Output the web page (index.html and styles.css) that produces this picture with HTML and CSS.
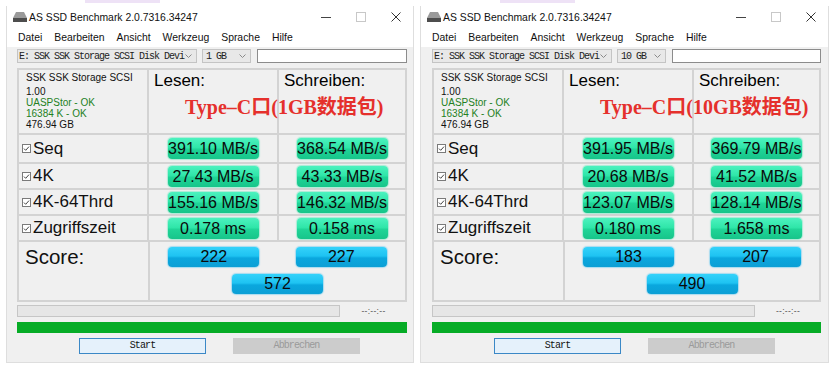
FILE: index.html
```html
<!DOCTYPE html>
<html>
<head>
<meta charset="utf-8">
<title>AS SSD Benchmark</title>
<link rel="stylesheet" href="styles.css">
</head>
<body>
<div class="topstrip">
  <div class="ts-half"><span class="ts-purple"></span></div>
  <div class="ts-half"><span class="ts-purple"></span></div>
</div>
<div class="screens">
  <!-- LEFT WINDOW -->
  <div class="win">
    <div class="titlebar">
      <svg class="appicon" viewBox="0 0 14 10" width="14" height="10"><polygon points="3,0 11,0 14,6 0,6" fill="#9a9a9a"/><rect x="0" y="6" width="14" height="4" fill="#4d4d4d"/></svg>
      <span class="title">AS SSD Benchmark 2.0.7316.34247</span>
      <div class="controls">
        <span class="ctl"><svg width="10" height="10" viewBox="0 0 10 10"><line x1="0" y1="5.5" x2="10" y2="5.5" stroke="#444" stroke-width="1"/></svg></span>
        <span class="ctl"><svg width="10" height="10" viewBox="0 0 10 10"><rect x="0.5" y="0.5" width="9" height="9" fill="none" stroke="#c8c8c8" stroke-width="1"/></svg></span>
        <span class="ctl"><svg width="10" height="10" viewBox="0 0 10 10"><path d="M0.5 0.5 L9.5 9.5 M9.5 0.5 L0.5 9.5" stroke="#333" stroke-width="1"/></svg></span>
      </div>
    </div>
    <div class="menubar">
      <span>Datei</span><span>Bearbeiten</span><span>Ansicht</span><span>Werkzeug</span><span>Sprache</span><span>Hilfe</span>
    </div>
    <div class="client">
      <div class="toolrow">
        <div class="combo combo-drive"><span class="combo-text">E: SSK SSK Storage SCSI Disk Devi</span><svg class="chev" width="7" height="4" viewBox="0 0 7 4"><path d="M0.5 0.5 L3.5 3.5 L6.5 0.5" fill="none" stroke="#8a8a8a"/></svg></div>
        <div class="combo combo-size"><span class="combo-text">1 GB</span><svg class="chev" width="7" height="4" viewBox="0 0 7 4"><path d="M0.5 0.5 L3.5 3.5 L6.5 0.5" fill="none" stroke="#8a8a8a"/></svg></div>
        <div class="textbox"></div>
      </div>
      <div class="results">
        <div class="cell info">
          <div class="info-name">SSK SSK Storage SCSI</div>
          <div>1.00</div>
          <div class="ok">UASPStor - OK</div>
          <div class="ok">16384 K - OK</div>
          <div>476.94 GB</div>
        </div>
        <div class="cell head">Lesen:</div>
        <div class="cell head">Schreiben:</div>

        <div class="cell label"><svg class="chk" width="9" height="9" viewBox="0 0 9 9"><rect x="0.5" y="0.5" width="8" height="8" fill="#fff" stroke="#7a7a7a"/><path d="M2 4.6 L3.7 6.3 L7 2.6" fill="none" stroke="#444"/></svg>Seq</div>
        <div class="cell val"><span class="pill">391.10 MB/s</span></div>
        <div class="cell val"><span class="pill">368.54 MB/s</span></div>

        <div class="cell label"><svg class="chk" width="9" height="9" viewBox="0 0 9 9"><rect x="0.5" y="0.5" width="8" height="8" fill="#fff" stroke="#7a7a7a"/><path d="M2 4.6 L3.7 6.3 L7 2.6" fill="none" stroke="#444"/></svg>4K</div>
        <div class="cell val"><span class="pill">27.43 MB/s</span></div>
        <div class="cell val"><span class="pill">43.33 MB/s</span></div>

        <div class="cell label"><svg class="chk" width="9" height="9" viewBox="0 0 9 9"><rect x="0.5" y="0.5" width="8" height="8" fill="#fff" stroke="#7a7a7a"/><path d="M2 4.6 L3.7 6.3 L7 2.6" fill="none" stroke="#444"/></svg>4K-64Thrd</div>
        <div class="cell val"><span class="pill">155.16 MB/s</span></div>
        <div class="cell val"><span class="pill">146.32 MB/s</span></div>

        <div class="cell label"><svg class="chk" width="9" height="9" viewBox="0 0 9 9"><rect x="0.5" y="0.5" width="8" height="8" fill="#fff" stroke="#7a7a7a"/><path d="M2 4.6 L3.7 6.3 L7 2.6" fill="none" stroke="#444"/></svg>Zugriffszeit</div>
        <div class="cell val"><span class="pill">0.178 ms</span></div>
        <div class="cell val"><span class="pill">0.158 ms</span></div>

        <div class="overlay">Type–C口(1GB数据包)</div>
      </div>
      <div class="scorebox">
        <div class="cell score-label">Score:</div>
        <div class="cell score-vals">
          <span class="pill blue">222</span>
          <span class="pill blue">227</span>
          <span class="pill blue total">572</span>
        </div>
      </div>
      <div class="progressrow">
        <div class="progress"></div>
        <span class="time">--:--:--</span>
      </div>
      <div class="greenbar"></div>
      <div class="buttons">
        <button class="btn btn-start">Start</button>
        <button class="btn btn-abort" disabled>Abbrechen</button>
      </div>
    </div>
  </div>

  <!-- RIGHT WINDOW -->
  <div class="win win-b">
    <div class="titlebar">
      <svg class="appicon" viewBox="0 0 14 10" width="14" height="10"><polygon points="3,0 11,0 14,6 0,6" fill="#9a9a9a"/><rect x="0" y="6" width="14" height="4" fill="#4d4d4d"/></svg>
      <span class="title">AS SSD Benchmark 2.0.7316.34247</span>
      <div class="controls">
        <span class="ctl"><svg width="10" height="10" viewBox="0 0 10 10"><line x1="0" y1="5.5" x2="10" y2="5.5" stroke="#444" stroke-width="1"/></svg></span>
        <span class="ctl"><svg width="10" height="10" viewBox="0 0 10 10"><rect x="0.5" y="0.5" width="9" height="9" fill="none" stroke="#c8c8c8" stroke-width="1"/></svg></span>
        <span class="ctl"><svg width="10" height="10" viewBox="0 0 10 10"><path d="M0.5 0.5 L9.5 9.5 M9.5 0.5 L0.5 9.5" stroke="#333" stroke-width="1"/></svg></span>
      </div>
    </div>
    <div class="menubar">
      <span>Datei</span><span>Bearbeiten</span><span>Ansicht</span><span>Werkzeug</span><span>Sprache</span><span>Hilfe</span>
    </div>
    <div class="client">
      <div class="toolrow">
        <div class="combo combo-drive"><span class="combo-text">E: SSK SSK Storage SCSI Disk Devi</span><svg class="chev" width="7" height="4" viewBox="0 0 7 4"><path d="M0.5 0.5 L3.5 3.5 L6.5 0.5" fill="none" stroke="#8a8a8a"/></svg></div>
        <div class="combo combo-size"><span class="combo-text">10 GB</span><svg class="chev" width="7" height="4" viewBox="0 0 7 4"><path d="M0.5 0.5 L3.5 3.5 L6.5 0.5" fill="none" stroke="#8a8a8a"/></svg></div>
        <div class="textbox"></div>
      </div>
      <div class="results">
        <div class="cell info">
          <div class="info-name">SSK SSK Storage SCSI</div>
          <div>1.00</div>
          <div class="ok">UASPStor - OK</div>
          <div class="ok">16384 K - OK</div>
          <div>476.94 GB</div>
        </div>
        <div class="cell head">Lesen:</div>
        <div class="cell head">Schreiben:</div>

        <div class="cell label"><svg class="chk" width="9" height="9" viewBox="0 0 9 9"><rect x="0.5" y="0.5" width="8" height="8" fill="#fff" stroke="#7a7a7a"/><path d="M2 4.6 L3.7 6.3 L7 2.6" fill="none" stroke="#444"/></svg>Seq</div>
        <div class="cell val"><span class="pill">391.95 MB/s</span></div>
        <div class="cell val"><span class="pill">369.79 MB/s</span></div>

        <div class="cell label"><svg class="chk" width="9" height="9" viewBox="0 0 9 9"><rect x="0.5" y="0.5" width="8" height="8" fill="#fff" stroke="#7a7a7a"/><path d="M2 4.6 L3.7 6.3 L7 2.6" fill="none" stroke="#444"/></svg>4K</div>
        <div class="cell val"><span class="pill">20.68 MB/s</span></div>
        <div class="cell val"><span class="pill">41.52 MB/s</span></div>

        <div class="cell label"><svg class="chk" width="9" height="9" viewBox="0 0 9 9"><rect x="0.5" y="0.5" width="8" height="8" fill="#fff" stroke="#7a7a7a"/><path d="M2 4.6 L3.7 6.3 L7 2.6" fill="none" stroke="#444"/></svg>4K-64Thrd</div>
        <div class="cell val"><span class="pill">123.07 MB/s</span></div>
        <div class="cell val"><span class="pill">128.14 MB/s</span></div>

        <div class="cell label"><svg class="chk" width="9" height="9" viewBox="0 0 9 9"><rect x="0.5" y="0.5" width="8" height="8" fill="#fff" stroke="#7a7a7a"/><path d="M2 4.6 L3.7 6.3 L7 2.6" fill="none" stroke="#444"/></svg>Zugriffszeit</div>
        <div class="cell val"><span class="pill">0.180 ms</span></div>
        <div class="cell val"><span class="pill">1.658 ms</span></div>

        <div class="overlay">Type–C口(10GB数据包)</div>
      </div>
      <div class="scorebox">
        <div class="cell score-label">Score:</div>
        <div class="cell score-vals">
          <span class="pill blue">183</span>
          <span class="pill blue">207</span>
          <span class="pill blue total">490</span>
        </div>
      </div>
      <div class="progressrow">
        <div class="progress"></div>
        <span class="time">--:--:--</span>
      </div>
      <div class="greenbar"></div>
      <div class="buttons">
        <button class="btn btn-start">Start</button>
        <button class="btn btn-abort" disabled>Abbrechen</button>
      </div>
    </div>
  </div>
</div>
</body>
</html>
```

FILE: styles.css
```css
* { box-sizing: border-box; margin: 0; padding: 0; }

html, body {
  width: 835px;
  height: 370px;
  overflow: hidden;
  background: #ffffff;
}

body {
  font-family: "Liberation Sans", Arial, sans-serif;
  color: #000;
}

/* faint remains of the image above */
.topstrip {
  height: 6px;
  display: flex;
}
.ts-half {
  width: 415px;
  padding-left: 85px;
}
.ts-purple {
  display: block;
  width: 75px;
  height: 3px;
  background: #eee2f6;
}

.screens {
  display: flex;
  gap: 6px;
  padding-left: 6px;
}

.win {
  width: 408px;
  height: 357px;
  background: #f0f0f0;
  border: 1px solid #dedede;
  border-top: none;
  display: flex;
  flex-direction: column;
}
.win-b { width: 409px; }

/* title bar */
.titlebar {
  height: 22px;
  background: #ffffff;
  display: flex;
  align-items: center;
  padding-left: 6px;
}
.appicon { flex: none; margin-top: -1px; }
.title {
  margin-left: 2px;
  font-size: 10.4px;
  color: #111;
}
.controls {
  margin-left: auto;
  display: flex;
  height: 100%;
}
.ctl {
  width: 35px;
  display: flex;
  align-items: center;
  justify-content: center;
}

/* menu */
.menubar {
  height: 19px;
  background: #ffffff;
  display: flex;
  align-items: center;
  gap: 12px;
  padding-left: 11px;
  font-size: 10.4px;
  color: #111;
}

/* client area */
.client {
  flex: 1;
  padding: 2px 6px 0 10px;
  display: flex;
  flex-direction: column;
}
.win-b .client { padding-left: 11px; padding-right: 7px; }

.toolrow {
  height: 14px;
  display: flex;
}
.combo {
  height: 14px;
  background: #e8e8e8;
  border: 1px solid #c4c4c4;
  display: flex;
  align-items: center;
  padding: 0 4px 0 1px;
}
.combo-text {
  font-family: "Liberation Mono", monospace;
  font-size: 10px;
  letter-spacing: -1px;
  color: #222;
  white-space: nowrap;
  flex: 1;
}
.chev { flex: none; }
.combo-drive { width: 180px; }
.combo-size { width: 49px; margin-left: 5px; padding-left: 3px; }
.textbox {
  flex: 1;
  margin-left: 6px;
  background: #fff;
  border: 1px solid #8c8c8c;
}

/* results grid */
.results {
  position: relative;
  margin-top: 5px;
  display: grid;
  grid-template-columns: 128px 128px 1fr;
  grid-template-rows: 63px 27px 24px 24px 24px;
  gap: 2px;
  padding: 2px;
  background: #d3d3d3;
}
.cell {
  background: #f0f0f0;
}
.info {
  padding: 2px 0 0 7px;
  font-size: 10px;
  line-height: 11px;
  color: #111;
}
.info-name { margin-bottom: 3px; }
.ok { color: #238023; }
.head {
  padding: 1px 0 0 5px;
  font-size: 17px;
  line-height: 20px;
  color: #000;
}
.label {
  display: flex;
  align-items: center;
  padding-left: 3px;
  font-size: 17px;
  color: #111;
}
.chk { flex: none; margin-right: 2px; }
.val {
  display: flex;
  align-items: center;
  justify-content: center;
}
.pill {
  display: block;
  width: 91px;
  height: 21px;
  line-height: 21px;
  text-align: center;
  font-size: 16px;
  color: #0a0a0a;
  border-radius: 4px;
  background: linear-gradient(to bottom, #4cf2bf 0%, #30e6a9 45%, #1fd497 55%, #17c58a 100%);
  box-shadow: 0 0 1px 1px rgba(80, 230, 180, 0.45);
}

.overlay {
  position: absolute;
  left: 168px;
  top: 27px;
  font-family: "Liberation Serif", "Noto Sans CJK SC", serif;
  font-weight: bold;
  font-size: 20px;
  line-height: 24px;
  color: #e5302c;
  white-space: nowrap;
}

/* score */
.scorebox {
  display: grid;
  grid-template-columns: 129px 1fr;
  gap: 2px;
  padding: 0 2px 2px 2px;
  background: #d3d3d3;
  height: 60px;
}
.score-label {
  padding: 3px 0 0 6px;
  font-size: 20.5px;
  line-height: 24px;
  color: #111;
}
.score-vals {
  display: grid;
  grid-template-columns: 1fr 1fr;
  row-gap: 7px;
  justify-items: center;
  align-content: start;
  padding-top: 5px;
}
.pill.blue {
  height: 20px;
  line-height: 20px;
  background: linear-gradient(to bottom, #34d2fa 0%, #1ec3f2 45%, #0aa7de 55%, #0b9fd5 100%);
  box-shadow: 0 0 1px 1px rgba(60, 190, 240, 0.4);
}
.pill.total {
  grid-column: 1 / span 2;
}

/* progress */
.progressrow {
  margin-top: 3px;
  height: 12px;
  display: flex;
  align-items: center;
}
.progress {
  width: 323px;
  height: 12px;
  background: #e6e6e6;
  border: 1px solid #c6c6c6;
}
.time {
  flex: 1;
  text-align: center;
  font-size: 8.5px;
  color: #555;
  letter-spacing: 0.3px;
}
.greenbar {
  margin-top: 5px;
  height: 11px;
  background: #06ac26;
}
.buttons {
  margin-top: 5px;
  display: flex;
  gap: 27px;
  padding-left: 62px;
}
.btn {
  width: 127px;
  height: 16px;
  font-family: "Liberation Mono", monospace;
  font-size: 10px;
  letter-spacing: -0.9px;
  line-height: 14px;
  text-align: center;
}
.btn-start {
  background: #e5f1fb;
  border: 1px solid #3b88c6;
  color: #111;
}
.btn-abort {
  background: #cccccc;
  border: 1px solid #cccccc;
  color: #9a9a9a;
}
```
